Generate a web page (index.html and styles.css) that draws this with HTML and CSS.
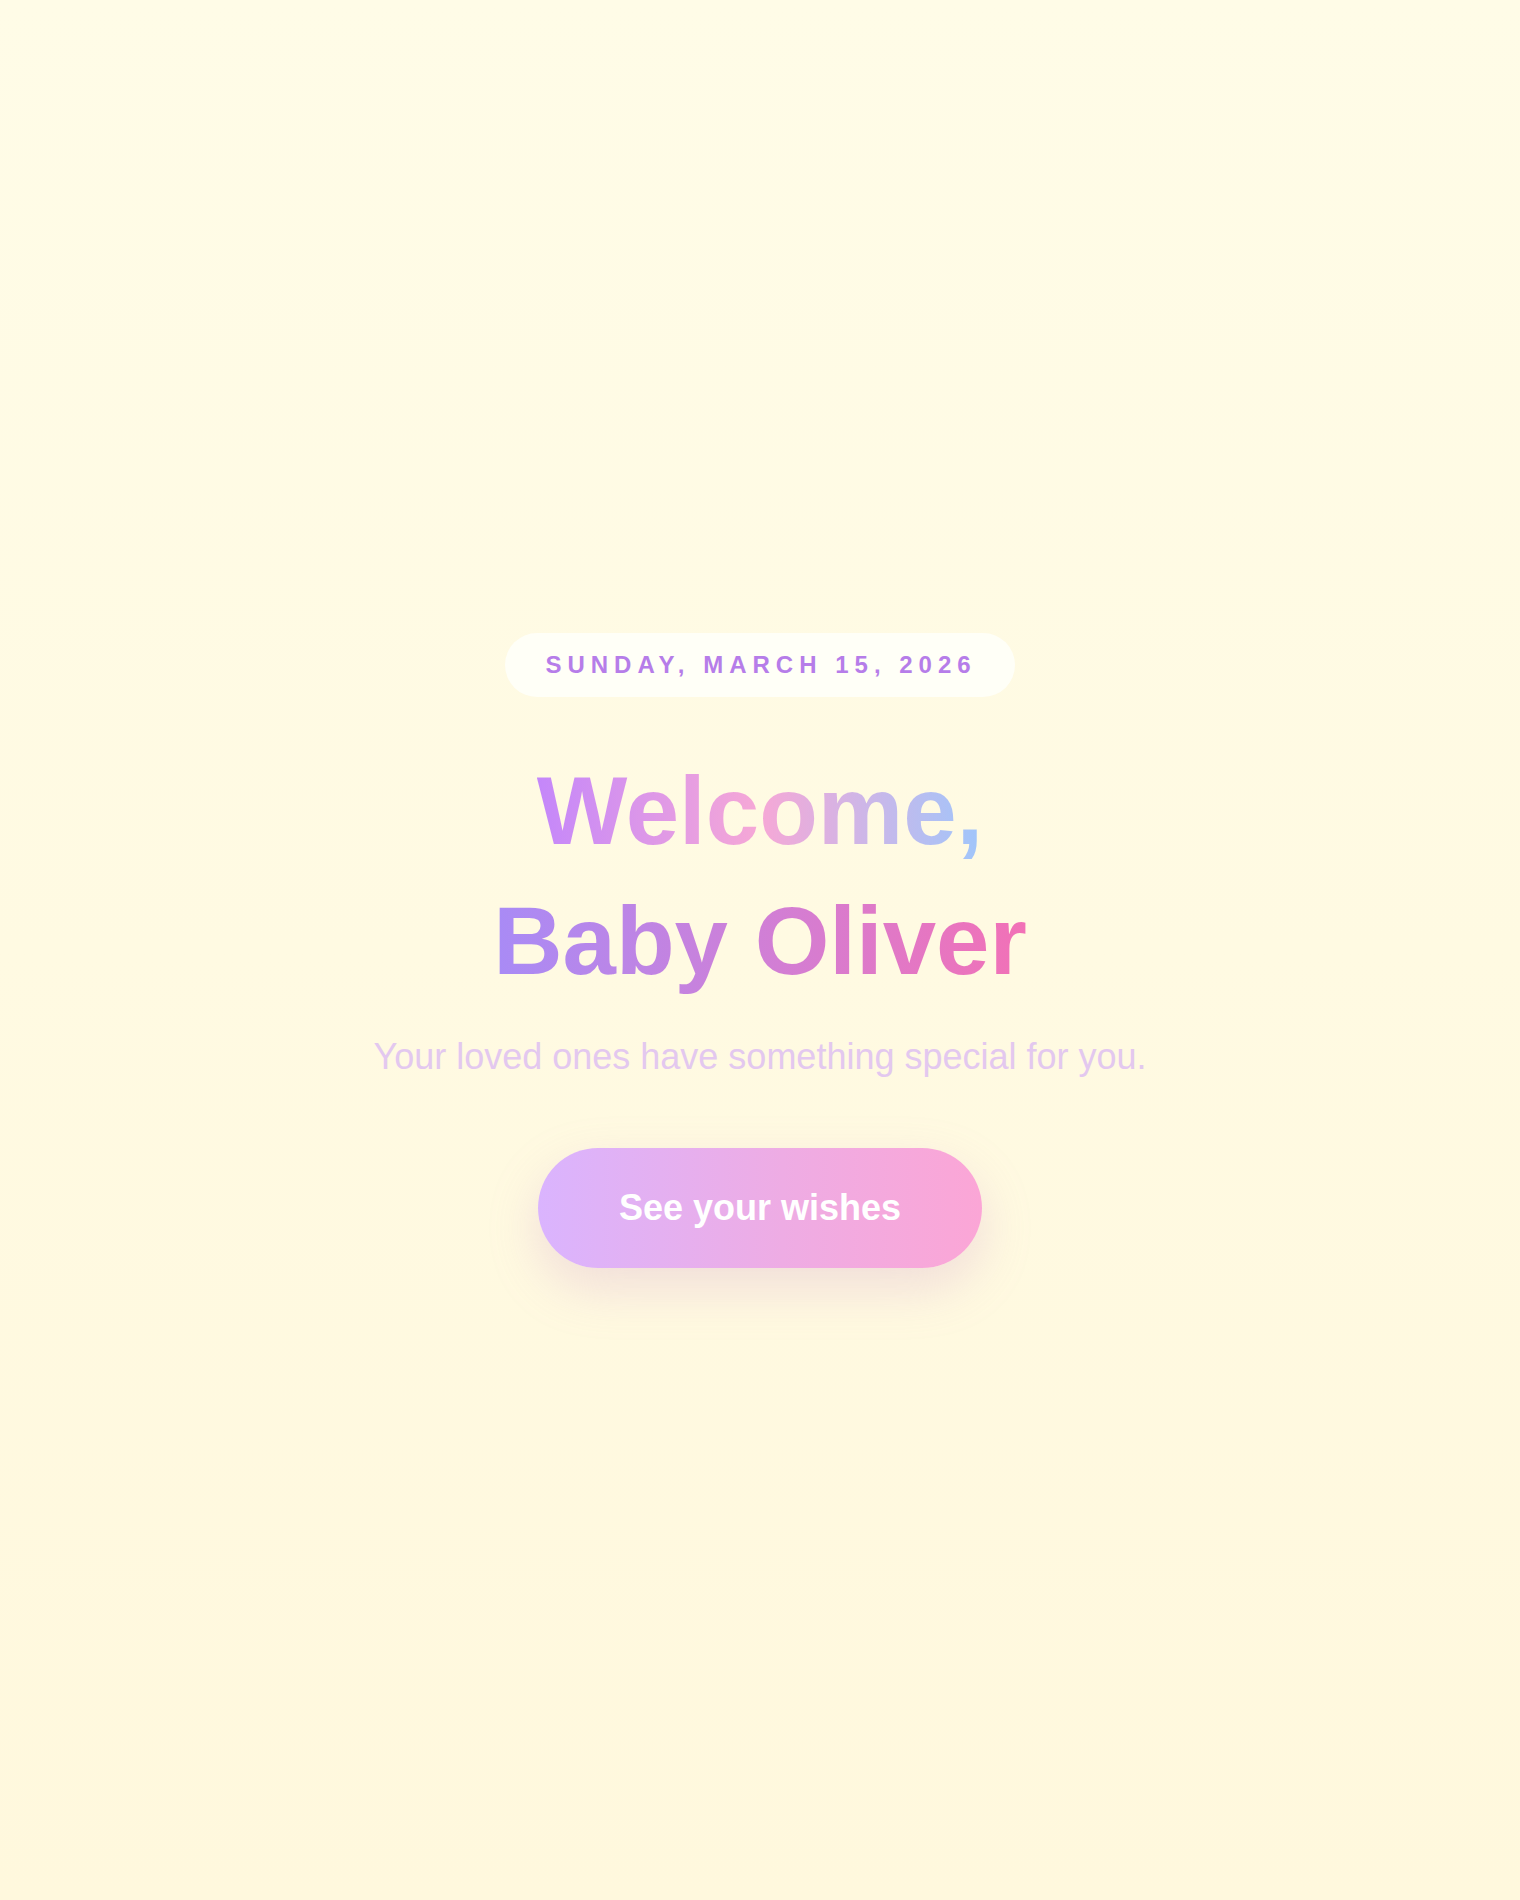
FILE: index.html
```html
<!DOCTYPE html>
<html lang="en">
<head>
<meta charset="utf-8">
<title>Welcome, Baby Oliver</title>
<link rel="stylesheet" href="styles.css">
</head>
<body>
<main class="page">
  <section class="hero">
    <div class="date-pill">SUNDAY, MARCH 15, 2026</div>
    <h1 class="title">
      <span class="line line-welcome">Welcome,</span>
      <span class="line line-name">Baby Oliver</span>
    </h1>
    <p class="subtitle">Your loved ones have something special for you.</p>
    <button class="cta" type="button">See your wishes</button>
  </section>
</main>
</body>
</html>
```
FILE: styles.css
```css
* { box-sizing: border-box; }
html, body { margin: 0; padding: 0; }
body {
  font-family: "Liberation Sans", Arial, Helvetica, sans-serif;
  background: linear-gradient(180deg, #fffce7 0%, #fff8dd 100%);
  min-height: 100vh;
}
.page {
  min-height: 1900px;
  display: flex;
  align-items: center;
  justify-content: center;
}
.hero {
  display: flex;
  flex-direction: column;
  align-items: center;
  text-align: center;
}
.date-pill {
  background: rgba(255, 255, 250, 0.85);
  border-radius: 999px;
  padding: 20px 38px 20px 40px;
  font-size: 24px;
  line-height: 24px;
  font-weight: 700;
  letter-spacing: 6px;
  color: #b67de9;
}
.title {
  margin: 49px 0 0;
  font-size: 96px;
  line-height: 130px;
  font-weight: 700;
  display: flex;
  flex-direction: column;
  align-items: center;
}
.line {
  display: block;
  -webkit-background-clip: text;
  background-clip: text;
  color: transparent;
}
.line-welcome {
  background-image: linear-gradient(90deg, #c487fa 0%, #f6a8d6 50%, #9fc6fb 100%);
}
.line-name {
  background-image: linear-gradient(90deg, #a88bf6 0%, #d07fd6 50%, #f271b6 100%);
}
.subtitle {
  margin: 24px 0 0;
  font-size: 36px;
  line-height: 54px;
  color: #e3c8ef;
}
.cta {
  margin-top: 64px;
  border: none;
  border-radius: 999px;
  padding: 38px 81px;
  font-family: inherit;
  font-size: 36px;
  line-height: 44px;
  font-weight: 700;
  color: #ffffff;
  background: linear-gradient(90deg, #dab4fe 0%, #eeace4 55%, #fba6d6 100%);
  box-shadow: 0 20px 50px rgba(205, 150, 200, 0.28);
  cursor: pointer;
}
```
